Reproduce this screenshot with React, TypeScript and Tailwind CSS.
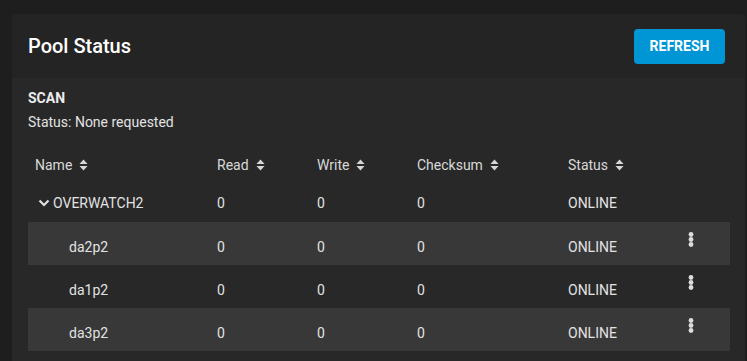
const rows = [
  { name: "da2p2", striped: true },
  { name: "da1p2", striped: false },
  { name: "da3p2", striped: true },
];

const cols = "grid grid-cols-[182px_100px_100px_151px_1fr_44px] pl-[7px]";

function SortIcon() {
  return (
    <svg width="9" height="12" viewBox="0 0 9 12" className="ml-[7px] shrink-0">
      <path d="M4.5 0.5 L8.5 5 H0.5 Z" fill="#d6d6d6" />
      <path d="M4.5 11.5 L8.5 7 H0.5 Z" fill="#d6d6d6" />
    </svg>
  );
}

function Chevron() {
  return (
    <svg width="12" height="8" viewBox="0 0 12 8" className="mr-[3px] ml-[3px]">
      <path d="M1.5 1.5 L6 6 L10.5 1.5" fill="none" stroke="#e0e0e0" strokeWidth="2.2" />
    </svg>
  );
}

function Dots() {
  return (
    <svg width="6" height="16" viewBox="0 0 6 16" className="mt-[10px] ml-[2px]">
      <circle cx="3" cy="2.5" r="2.4" fill="#dcdcdc" />
      <circle cx="3" cy="7.5" r="2.4" fill="#dcdcdc" />
      <circle cx="3" cy="12.5" r="2.4" fill="#dcdcdc" />
    </svg>
  );
}

function HeaderCell({ label }: { label: string }) {
  return (
    <div className="flex items-center pt-[15px]">
      <span>{label}</span>
      <SortIcon />
    </div>
  );
}

export default function App() {
  return (
    <div className="min-h-[361px] bg-[#1e1e1e] pl-[12px] pr-[2px] pt-[14px] font-['Roboto',sans-serif] text-[14px] leading-[20px] text-[#e2e2e2]">
      <div className="rounded-t-[4px] overflow-hidden">
        <div className="flex h-[64px] items-center justify-between bg-[#242424] pl-[16px] pr-[20px]">
          <h2 className="text-[20px] leading-[28px] font-medium text-white">Pool Status</h2>
          <button className="h-[35px] w-[91px] rounded-[4px] bg-[#0095d5] text-[14px] font-bold text-white">
            REFRESH
          </button>
        </div>
        <div className="h-[283px] bg-[#282828] pl-[16px] pr-[15px] pt-[12px]">
          <div className="text-[14px] font-bold leading-[16px] text-[#ececec]">SCAN</div>
          <div className="mt-[6px]">Status: None requested</div>
          <div className="mt-[5px]">
            <div className={`${cols} h-[41px] text-[#d8d8d8]`}>
              <HeaderCell label="Name" />
              <HeaderCell label="Read" />
              <HeaderCell label="Write" />
              <HeaderCell label="Checksum" />
              <HeaderCell label="Status" />
              <div />
            </div>
            <div className={`${cols} h-[44px]`}>
              <div className="flex items-center pt-[15px] h-[35px]">
                <Chevron />
                <span>OVERWATCH2</span>
              </div>
              <div className="pt-[15px]">0</div>
              <div className="pt-[15px]">0</div>
              <div className="pt-[15px]">0</div>
              <div className="pt-[15px]">ONLINE</div>
              <div />
            </div>
            {rows.map((r) => (
              <div
                key={r.name}
                className={`${cols} h-[43px] ${r.striped ? "bg-[#383838]" : ""}`}
              >
                <div className="pt-[15px] pl-[34px]">{r.name}</div>
                <div className="pt-[15px]">0</div>
                <div className="pt-[15px]">0</div>
                <div className="pt-[15px]">0</div>
                <div className="pt-[15px]">ONLINE</div>
                <div>
                  <Dots />
                </div>
              </div>
            ))}
          </div>
        </div>
      </div>
    </div>
  );
}
